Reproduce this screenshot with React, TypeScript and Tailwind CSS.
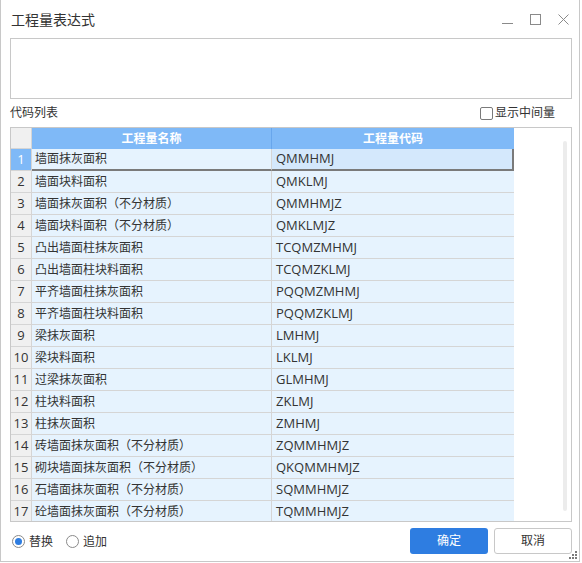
import React from 'react';

type Row = { id: number; name: string; code: string };

const rows: Row[] = [
  { id: 1, name: '墙面抹灰面积', code: 'QMMHMJ' },
  { id: 2, name: '墙面块料面积', code: 'QMKLMJ' },
  { id: 3, name: '墙面抹灰面积（不分材质）', code: 'QMMHMJZ' },
  { id: 4, name: '墙面块料面积（不分材质）', code: 'QMKLMJZ' },
  { id: 5, name: '凸出墙面柱抹灰面积', code: 'TCQMZMHMJ' },
  { id: 6, name: '凸出墙面柱块料面积', code: 'TCQMZKLMJ' },
  { id: 7, name: '平齐墙面柱抹灰面积', code: 'PQQMZMHMJ' },
  { id: 8, name: '平齐墙面柱块料面积', code: 'PQQMZKLMJ' },
  { id: 9, name: '梁抹灰面积', code: 'LMHMJ' },
  { id: 10, name: '梁块料面积', code: 'LKLMJ' },
  { id: 11, name: '过梁抹灰面积', code: 'GLMHMJ' },
  { id: 12, name: '柱块料面积', code: 'ZKLMJ' },
  { id: 13, name: '柱抹灰面积', code: 'ZMHMJ' },
  { id: 14, name: '砖墙面抹灰面积（不分材质）', code: 'ZQMMHMJZ' },
  { id: 15, name: '砌块墙面抹灰面积（不分材质）', code: 'QKQMMHMJZ' },
  { id: 16, name: '石墙面抹灰面积（不分材质）', code: 'SQMMHMJZ' },
  { id: 17, name: '砼墙面抹灰面积（不分材质）', code: 'TQMMHMJZ' },
];

function Radio({ checked, label }: { checked?: boolean; label: string }) {
  return (
    <label className="flex items-center gap-[4px]">
      <span className="flex h-[13px] w-[13px] items-center justify-center rounded-full border border-[#8a8a8a] bg-white">
        {checked && <span className="h-[7px] w-[7px] rounded-full bg-[#2e7de1]" />}
      </span>
      <span>{label}</span>
    </label>
  );
}

export default function App() {
  return (
    <div
      className="h-[562px] w-[580px] border border-t-0 border-[#c8c8c8] bg-white text-[12px] text-[#333] flex flex-col relative"
      style={{ fontFamily: '"Open Sans", "Noto Sans CJK SC", sans-serif' }}
    >
      {/* title bar */}
      <div className="flex h-[38px] shrink-0 items-center justify-between pl-[10px] pr-[10px]">
        <span className="text-[14px] text-[#333]">工程量表达式</span>
        <div className="flex items-center gap-[17px] text-[#8a8a8a]">
          <svg width="11" height="11" viewBox="0 0 11 11">
            <line x1="0" y1="9.5" x2="11" y2="9.5" stroke="currentColor" strokeWidth="1" />
          </svg>
          <svg width="11" height="11" viewBox="0 0 11 11">
            <rect x="0.5" y="0.5" width="10" height="10" fill="none" stroke="currentColor" strokeWidth="1" />
          </svg>
          <svg width="11" height="11" viewBox="0 0 11 11">
            <path d="M0.5 0.5 L10.5 10.5 M10.5 0.5 L0.5 10.5" stroke="currentColor" strokeWidth="1" />
          </svg>
        </div>
      </div>

      <div className="flex flex-1 flex-col pl-[9px] pr-[7px]">
        {/* expression box */}
        <div className="h-[61px] shrink-0 border border-[#c8c8c8] bg-white" />

        {/* list label */}
        <div className="flex h-[28px] shrink-0 items-center justify-between pr-[17px]">
          <span>代码列表</span>
          <label className="flex items-center gap-[2px]">
            <span className="h-[13px] w-[13px] rounded-[2px] border border-[#7a7a7a] bg-white" />
            <span>显示中间量</span>
          </label>
        </div>

        {/* table */}
        <div className="flex h-[395px] shrink-0 overflow-hidden border border-[#c8c8c8] bg-white">
          <div className="w-[503px] shrink-0">
            <div className="flex h-[21px] bg-[#7fb9f7] font-bold text-white">
              <div className="w-[21px] border-r border-b border-[#d5d5d5] bg-[#f0f0f0]" />
              <div className="flex w-[240px] items-center justify-center border-r border-[#68a6ec]">工程量名称</div>
              <div className="flex w-[242px] items-center justify-center">工程量代码</div>
            </div>
            {rows.map((r) => {
              const sel = r.id === 1;
              return (
                <div key={r.id} className="flex h-[22px]">
                  <div
                    className={
                      sel
                        ? 'flex w-[21px] items-center justify-center border-r border-b border-[#d5d5d5] bg-[#7fb9f7] text-[13px] text-white'
                        : 'flex w-[21px] items-center justify-center border-r border-b border-[#d5d5d5] bg-[#f0f0f0] text-[13px]'
                    }
                  >
                    {r.id}
                  </div>
                  <div
                    className={
                      sel
                        ? 'flex w-[240px] items-center border-r border-[#d5d5d5] border-b-2 border-b-[#7a7a7a] bg-[#e6f3fe] pl-[3px]'
                        : 'flex w-[240px] items-center border-r border-b border-[#d5d5d5] bg-[#e6f3fe] pl-[3px]'
                    }
                  >
                    {r.name}
                  </div>
                  <div
                    className={
                      sel
                        ? 'flex w-[242px] items-center border-r-2 border-b-2 border-[#7a7a7a] bg-[#d4e8fc] pl-[4px] text-[13px]'
                        : 'flex w-[242px] items-center border-b border-[#d5d5d5] bg-[#e6f3fe] pl-[4px] text-[13px]'
                    }
                  >
                    {r.code}
                  </div>
                </div>
              );
            })}
          </div>
          <div className="flex flex-1 justify-end pr-[4px] pt-[13px]">
            <div className="h-[370px] w-[4px] rounded-[2px] bg-[#ececec]" />
          </div>
        </div>

        {/* footer */}
        <div className="flex flex-1 items-center justify-between">
          <div className="flex items-center gap-[13px] pl-[2px]">
            <Radio checked label="替换" />
            <Radio label="追加" />
          </div>
          <div className="flex gap-[6px] pb-[2px]">
            <button className="h-[26px] w-[78px] rounded-[3px] bg-[#2e7de1] text-white">确定</button>
            <button className="h-[26px] w-[78px] rounded-[3px] border border-[#c8c8c8] bg-white text-[#333]">取消</button>
          </div>
        </div>
      </div>

      <svg className="absolute bottom-[2px] right-[2px]" width="8" height="8" viewBox="0 0 8 8">
        <rect x="6" y="0" width="2" height="2" fill="#7a7a7a" />
        <rect x="3" y="3" width="2" height="2" fill="#7a7a7a" />
        <rect x="6" y="3" width="2" height="2" fill="#7a7a7a" />
        <rect x="0" y="6" width="2" height="2" fill="#7a7a7a" />
        <rect x="3" y="6" width="2" height="2" fill="#7a7a7a" />
        <rect x="6" y="6" width="2" height="2" fill="#7a7a7a" />
      </svg>
    </div>
  );
}
